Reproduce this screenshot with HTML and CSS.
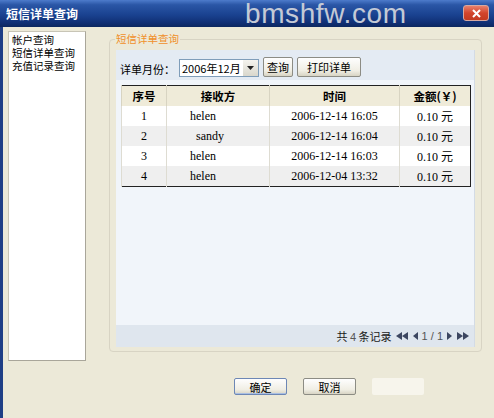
FILE: index.html
```html
<!DOCTYPE html>
<html lang="zh-CN">
<head>
  <meta charset="UTF-8">
  <meta name="viewport" content="width=device-width, initial-scale=1.0">
  <link rel="stylesheet" href="styles.css">
</head>
<body>
  <div class="window">
    <div class="titlebar">
      <span class="title">短信详单查询</span>
      <span class="watermark">bmshfw.com</span>
      <span class="close">
        <svg width="11" height="9" viewBox="0 0 11 9"><path d="M2 1 L9 8 M9 1 L2 8" stroke="#fff" stroke-width="2"/></svg>
      </span>
    </div>

    <div class="client">
      <div class="main">
        <ul class="sidebar">
          <li>帐户查询</li>
          <li>短信详单查询</li>
          <li>充值记录查询</li>
        </ul>

        <fieldset class="group">
          <legend>短信详单查询</legend>
          <div class="panel">
            <div class="toolbar">
              <label>详单月份：</label>
              <div class="select">
                <span>2006年12月</span>
                <span class="arrow"><svg width="7" height="4" viewBox="0 0 7 4"><path d="M0 0 H7 L3.5 4 Z" fill="#222"/></svg></span>
              </div>
              <button class="btn small">查询</button>
              <button class="btn wide">打印详单</button>
            </div>

            <table class="records">
              <thead>
                <tr><th class="c1">序号</th><th class="c2">接收方</th><th class="c3">时间</th><th class="c4">金额(￥)</th></tr>
              </thead>
              <tbody>
                <tr><td>1</td><td class="name">helen</td><td>2006-12-14 16:05</td><td>0.10 元</td></tr>
                <tr class="alt"><td>2</td><td class="name">&nbsp;&nbsp;sandy</td><td>2006-12-14 16:04</td><td>0.10 元</td></tr>
                <tr><td>3</td><td class="name">helen</td><td>2006-12-14 16:03</td><td>0.10 元</td></tr>
                <tr class="alt"><td>4</td><td class="name">helen</td><td>2006-12-04 13:32</td><td>0.10 元</td></tr>
              </tbody>
            </table>

            <div class="spacer"></div>

            <div class="pager">
              <span>共 <i>4</i> 条记录</span>
              <svg width="12" height="8" viewBox="0 0 12 8"><path d="M6 0 V8 L0 4 Z M12 0 V8 L6 4 Z" fill="#3c4660"/></svg>
              <svg width="6" height="8" viewBox="0 0 6 8"><path d="M6 0 V8 L1 4 Z" fill="#3c4660"/></svg>
              <span class="pages">1 / 1</span>
              <svg width="6" height="8" viewBox="0 0 6 8"><path d="M0 0 V8 L5 4 Z" fill="#3c4660"/></svg>
              <svg width="12" height="8" viewBox="0 0 12 8"><path d="M0 0 V8 L6 4 Z M6 0 V8 L12 4 Z" fill="#3c4660"/></svg>
            </div>
          </div>
        </fieldset>
      </div>

      <div class="actions">
        <button class="btn dialog default">确定</button>
        <button class="btn dialog">取消</button>
        <span class="ghost"></span>
      </div>
    </div>
  </div>
</body>
</html>
```

FILE: styles.css
```css
body {
  margin: 0;
  width: 494px;
  height: 418px;
  overflow: hidden;
  background-color: #ece9d8;
  font-family: "Noto Sans CJK SC", "Liberation Sans", sans-serif;
  font-size: 12px;
  color: #000;
}

.window {
  display: flex;
  flex-direction: column;
  height: 418px;
}

.titlebar {
  position: relative;
  height: 27px;
  display: flex;
  align-items: center;
  padding-left: 6px;
  background: linear-gradient(#4d7bcb 0%, #2a56a6 18%, #1a4290 55%, #102f74 85%, #0c275f 100%);
  overflow: hidden;
}

.title {
  color: #fff;
  font-weight: bold;
  font-size: 12px;
  margin-top: -1px;
}

.watermark {
  position: absolute;
  left: 245px;
  top: 0;
  font-family: "Liberation Sans", sans-serif;
  font-size: 28px;
  line-height: 27px;
  color: #c4cad6;
  letter-spacing: 0.6px;
}

.close {
  position: absolute;
  right: 5px;
  top: 5px;
  width: 24px;
  height: 14px;
  border-radius: 3px;
  border: 1px solid #d6a8a0;
  background: linear-gradient(#e8806c, #d2452c 50%, #c33a20);
  display: flex;
  align-items: center;
  justify-content: center;
}

.client {
  flex: 1;
  display: flex;
  flex-direction: column;
  border-left: 3px solid #1f3f86;
}

.main {
  display: flex;
  padding: 4px 10px 0 5px;
  gap: 23px;
}

.sidebar {
  list-style: none;
  margin: 0;
  padding: 1px 3px;
  width: 70px;
  height: 326px;
  background: #fff;
  border: 1px solid #a9a69a;
  border-top-color: #c8c5b6;
  border-left-color: #c8c5b6;
  font-size: 10.5px;
}

.sidebar li {
  line-height: 13px;
  white-space: nowrap;
}

.group {
  margin: 2px 0 0 0;
  padding: 5px 6px 4px 6px;
  width: 359px;
  height: 308px;
  border: 1px solid #d8d4c4;
  border-radius: 4px;
  display: flex;
}

.group legend {
  padding: 0 1px;
  margin-left: -1px;
  color: #f0902a;
  font-size: 10.5px;
  line-height: 12px;
}

.panel {
  flex: 1;
  display: flex;
  flex-direction: column;
  background: #f1f5fa;
  border-right: 1px solid #d3dbe5;
}

.toolbar {
  display: flex;
  align-items: center;
  height: 27px;
  padding: 3px 0 0 4px;
  background: #e4ebf3;
  white-space: nowrap;
}

.toolbar label {
  width: 59px;
  flex-shrink: 0;
  margin-top: 4px;
  font-size: 11px;
}

.select {
  display: flex;
  align-items: center;
  justify-content: space-between;
  flex-shrink: 0;
  width: 80px;
  height: 18px;
  margin-top: 2px;
  background: #fff;
  border: 1px solid #7f9db9;
  padding-left: 2px;
  box-sizing: border-box;
  font-size: 11px;
}

.arrow {
  width: 15px;
  height: 16px;
  background: linear-gradient(#f4f3ee, #d9d7cc);
  display: flex;
  align-items: center;
  justify-content: center;
}

.btn {
  font-family: "Noto Sans CJK SC", sans-serif;
  font-size: 11px;
  padding: 0;
  height: 20px;
  margin-left: 4px;
  background: linear-gradient(#fefefe, #f0eee4 70%, #d8d4c4);
  border: 1px solid #8c8c84;
  border-radius: 2px;
  color: #000;
  white-space: nowrap;
}

.btn.small {
  width: 30px;
}

.btn.wide {
  width: 64px;
}

.records {
  margin: 5px 0 0 5px;
  width: 350px;
  border-collapse: collapse;
  border: 1px solid #222;
  font-family: "Liberation Serif", "Noto Sans CJK SC", serif;
  font-size: 12px;
}

.records th {
  height: 20px;
  padding: 0;
  background: #efebd9;
  font-family: "Noto Sans CJK SC", sans-serif;
  font-size: 11.5px;
  font-weight: bold;
  border-left: 1px solid #d8d4c2;
}

.records td {
  height: 20px;
  padding: 0;
  text-align: center;
  background: #fff;
  border-left: 1px solid #dedcd2;
}

.records .alt td {
  background: #efefef;
}

.records td.name {
  text-align: left;
  padding-left: 23px;
}

.c1 { width: 44px; }
.c2 { width: 102px; }
.c3 { width: 129px; }

.spacer {
  flex: 1;
}

.pager {
  display: flex;
  align-items: center;
  justify-content: flex-end;
  gap: 4px;
  height: 22px;
  padding-right: 5px;
  background: #dfe6ee;
  color: #1a1a1a;
  font-size: 11px;
}

.pager i {
  font-style: normal;
  font-family: "Liberation Sans", sans-serif;
  color: #555;
}

.pages {
  font-family: "Liberation Sans", sans-serif;
  color: #555;
}

.actions {
  display: flex;
  align-items: center;
  padding: 17px 0 0 231px;
  gap: 16px;
}

.btn.dialog {
  width: 53px;
  height: 17px;
  margin: 0;
  line-height: 14px;
}

.btn.default {
  border-color: #6d87b5;
  box-shadow: inset 0 -1px 0 #a9bfe3;
}

.ghost {
  width: 52px;
  height: 17px;
  background: #f7f5ec;
  border-radius: 2px;
}
```
